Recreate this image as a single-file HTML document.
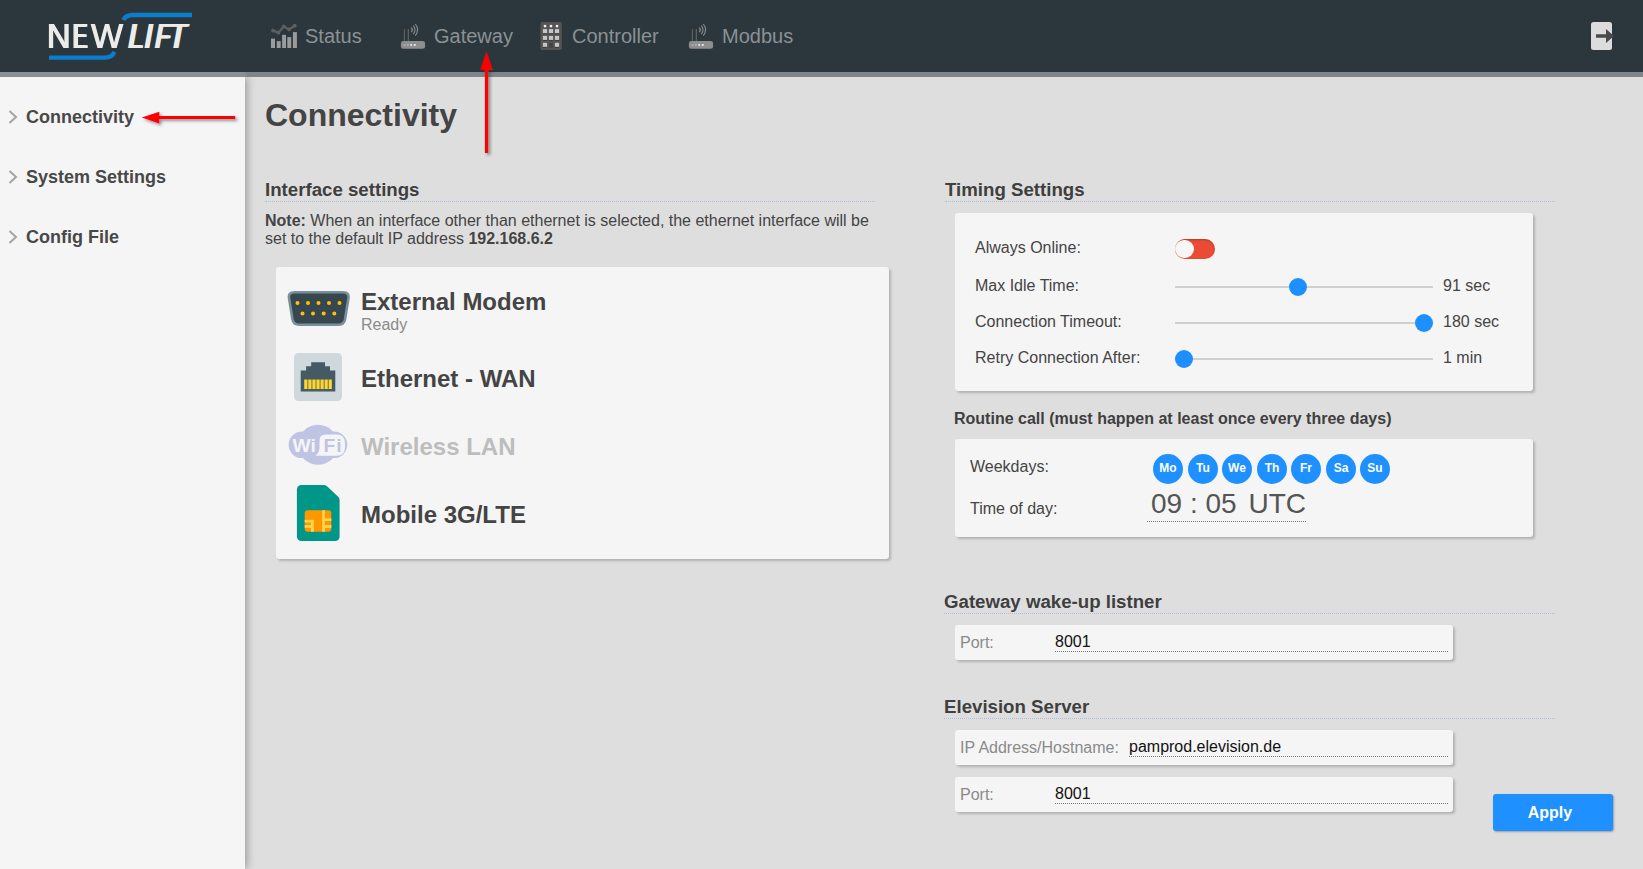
<!DOCTYPE html>
<html lang="en">
<head>
<meta charset="utf-8">
<title>Connectivity</title>
<style>
*{box-sizing:border-box;margin:0;padding:0}
html,body{width:1643px;height:869px;overflow:hidden}
body{font-family:"Liberation Sans",Arial,sans-serif;background:#dedede;color:#444;position:relative}
.abs{position:absolute}
.lg{position:absolute;top:0;font-size:35px;line-height:35px;color:#ecece8;transform-origin:0 29.63px;white-space:nowrap}
#header{position:absolute;left:0;top:0;width:1643px;height:77px;background:#2c373d;background-clip:padding-box;border-bottom:5px solid rgba(44,55,61,.53)}
.nav{position:absolute;top:24px;font-size:20px;line-height:24px;color:#8b9195;white-space:nowrap}
#sidetop{position:absolute;left:0;top:72px;width:247px;height:5px;background:linear-gradient(90deg,#f5f5f5 243px,#dedede 247px)}
#sidebar{position:absolute;left:0;top:77px;width:245px;height:792px;clip-path:inset(0 -20px 0 0);background:#f5f5f5;box-shadow:2px 0 8px rgba(0,0,0,.3)}
.side{position:absolute;left:26px;font-weight:bold;font-size:18px;line-height:22px;color:#484848;white-space:nowrap}
.chev{position:absolute;left:8px;width:10px;height:14px}
h1{position:absolute;left:265px;top:95.5px;font-size:32px;line-height:38px;font-weight:bold;color:#444}
.sec{position:absolute;font-size:18.67px;line-height:22px;font-weight:bold;color:#3f3f3f;white-space:nowrap}
.dot{position:absolute;height:0;border-top:1px dotted #aebedb}
.card{position:absolute;background:#f5f5f5;border-radius:3px;box-shadow:2px 2px 2.5px rgba(0,0,0,.2)}
.t16{position:absolute;font-size:16px;line-height:18px;color:#444;white-space:nowrap}
.if{position:absolute;left:361px;font-size:24px;line-height:28px;font-weight:bold;color:#444;white-space:nowrap}
.track{position:absolute;left:1175px;width:258px;height:2px;background:#d0d0d0}
.thumb{position:absolute;width:18px;height:18px;border-radius:50%;background:#1e8fff}
.day{position:absolute;top:454px;width:30px;height:30px;border-radius:50%;background:#1e90ff;color:#fff;font-size:12px;font-weight:bold;line-height:28px;text-align:center}
.lab{position:absolute;font-size:16px;line-height:18px;color:#8a8a8a;white-space:nowrap}
.val{position:absolute;font-size:16px;line-height:18px;color:#111;white-space:nowrap}
.udot{position:absolute;height:0;border-top:1px dotted #777}
</style>
</head>
<body>
<div id="sidebar"></div><div id="sidetop"></div>
<div id="header"></div>
<svg class="abs" style="left:40px;top:5px" width="160" height="65" viewBox="40 5 160 65">
<path d="M192 14.95 H132.5 Q125.8 14.95 123.4 20" fill="none" stroke="#0b7dcd" stroke-width="4.5"/>
<path d="M49 57.55 H105.5 Q112 57.55 114.4 51.9" fill="none" stroke="#0b7dcd" stroke-width="4.3"/>
</svg>
<div class="abs" id="logotxt" style="left:0;top:18.47px;width:200px;height:35px"><span class="lg" style="left:46.83px;transform:scaleX(0.9325);text-shadow:0.707px 0 0 #ecece8,-0.707px 0 0 #ecece8">N</span><span class="lg" style="left:73.36px;transform:scaleX(0.6164);text-shadow:1.903px 0 0 #ecece8,-1.903px 0 0 #ecece8">E</span><span class="lg" style="left:90.75px;transform:scaleX(0.971);text-shadow:0.615px 0 0 #ecece8,-0.615px 0 0 #ecece8">W</span><span class="lg" style="left:127.21px;transform:skewX(-10.2deg) scaleX(0.788);text-shadow:1.61px 0 0 #ecece8,-1.61px 0 0 #ecece8">L</span><span class="lg" style="left:141.84px;transform:skewX(-10.2deg) scaleX(1.0);text-shadow:0.77px 0 0 #ecece8,-0.77px 0 0 #ecece8">I</span><span class="lg" style="left:153.65px;transform:skewX(-10.2deg) scaleX(0.679);text-shadow:1.91px 0 0 #ecece8,-1.91px 0 0 #ecece8">F</span><span class="lg" style="left:166.6px;transform:skewX(-10.2deg) scaleX(0.828);text-shadow:1.45px 0 0 #ecece8,-1.45px 0 0 #ecece8">T</span></div>
<!-- status icon -->
<svg class="abs" style="left:268px;top:20px" width="32" height="32" viewBox="268 20 32 32">
<g fill="#9b9b9b"><rect x="271" y="38.6" width="4" height="9.4"/><rect x="276.8" y="41.1" width="3.9" height="6.9"/><rect x="282.1" y="34.8" width="3.9" height="13.2"/><rect x="287.3" y="37.1" width="3.9" height="10.9"/><rect x="292.9" y="32.1" width="4" height="15.9"/></g>
<path d="M273 30.7 L278.4 32.7 L283.75 26.4 L289.1 29.4 L294.8 25.7" fill="none" stroke="#5f5f5f" stroke-width="2.3" stroke-linejoin="round" stroke-linecap="round"/>
<g fill="#5f5f5f"><circle cx="273" cy="30.7" r="1.9"/><circle cx="278.4" cy="32.7" r="1.9"/><circle cx="283.75" cy="26.4" r="1.9"/><circle cx="289.1" cy="29.4" r="1.9"/><circle cx="294.8" cy="25.7" r="1.9"/></g>
</svg>
<div class="nav" style="left:305px">Status</div>
<svg class="abs" style="left:398px;top:20px" width="32" height="32" viewBox="398 20 32 32">
<rect x="400.9" y="41.1" width="24.2" height="7.7" rx="2.4" fill="#8e8e8e"/>
<rect x="403.9" y="29" width="0.9" height="12.1" fill="#6a6a6a"/><rect x="407.8" y="29" width="1" height="12.1" fill="#6a6a6a"/>
<rect x="403.8" y="44" width="1.6" height="1.9" fill="#adadad"/><rect x="407" y="44" width="1.6" height="1.9" fill="#b4b4b4"/><rect x="410.4" y="44" width="1.6" height="1.9" fill="#ececec"/><rect x="413.8" y="44" width="1.8" height="1.9" fill="#ececec"/>
<g fill="none" stroke="#909090" stroke-width="1.1">
<path d="M411.3 27.6 A3.2 3.2 0 0 1 411.3 32.0"/>
<path d="M413.3 25.6 A6 6 0 0 1 413.3 34.0"/>
<path d="M415.3 24.0 A8.6 8.6 0 0 1 415.3 35.6"/>
</g>
</svg>
<div class="nav" style="left:434px">Gateway</div>
<svg class="abs" style="left:538px;top:20px" width="26" height="32" viewBox="538 20 26 32">
<rect x="540.4" y="22" width="21.4" height="28.1" rx="1.8" fill="#545454"/>
<g fill="#f0f0f0"><rect x="543.8" y="24.9" width="2.4" height="2.4"/><rect x="549.8" y="24.9" width="2.4" height="2.4"/><rect x="555.8" y="24.9" width="2.4" height="2.4"/></g>
<g fill="#3e3e3e"><rect x="542.9" y="33.1" width="4.2" height="1"/><rect x="548.9" y="33.1" width="4.2" height="1"/><rect x="554.9" y="33.1" width="4.2" height="1"/>
<rect x="542.9" y="39.9" width="4.2" height="1"/><rect x="548.9" y="39.9" width="4.2" height="1"/><rect x="554.9" y="39.9" width="4.2" height="1"/>
<rect x="542.9" y="46.8" width="4.2" height="1"/><rect x="554.9" y="46.8" width="4.2" height="1"/></g>
<g fill="#c6c6c6"><rect x="542.9" y="29.1" width="4.2" height="4"/><rect x="548.9" y="29.1" width="4.2" height="4"/><rect x="554.9" y="29.1" width="4.2" height="4"/>
<rect x="542.9" y="35.9" width="4.2" height="4"/><rect x="548.9" y="35.9" width="4.2" height="4"/><rect x="554.9" y="35.9" width="4.2" height="4"/>
<rect x="542.9" y="42.8" width="4.2" height="4"/><rect x="554.9" y="42.8" width="4.2" height="4"/></g>
<rect x="549.1" y="43" width="3.8" height="4.7" fill="#444"/>
</svg>
<div class="nav" style="left:572px">Controller</div>
<svg class="abs" style="left:686px;top:20px" width="32" height="32" viewBox="398 20 32 32">
<rect x="400.9" y="41.1" width="24.2" height="7.7" rx="2.4" fill="#8e8e8e"/>
<rect x="403.9" y="29" width="0.9" height="12.1" fill="#6a6a6a"/><rect x="407.8" y="29" width="1" height="12.1" fill="#6a6a6a"/>
<rect x="403.8" y="44" width="1.6" height="1.9" fill="#adadad"/><rect x="407" y="44" width="1.6" height="1.9" fill="#b4b4b4"/><rect x="410.4" y="44" width="1.6" height="1.9" fill="#ececec"/><rect x="413.8" y="44" width="1.8" height="1.9" fill="#ececec"/>
<g fill="none" stroke="#909090" stroke-width="1.1">
<path d="M411.3 27.6 A3.2 3.2 0 0 1 411.3 32.0"/>
<path d="M413.3 25.6 A6 6 0 0 1 413.3 34.0"/>
<path d="M415.3 24.0 A8.6 8.6 0 0 1 415.3 35.6"/>
</g>
</svg>
<div class="nav" style="left:722px">Modbus</div>
<!-- logout -->
<svg class="abs" style="left:1590px;top:21px" width="26" height="30" viewBox="0 0 26 30">
<rect x="1" y="1" width="21" height="28" rx="2.5" fill="#dcdcdc"/>
<path d="M6 13.2 H16 V8 L24 15 L16 22 V16.8 H6 Z" fill="#4a4a4a"/>
</svg>
<!-- red arrows -->
<svg class="abs" style="left:470px;top:50px" width="40" height="110" viewBox="470 50 40 110">
<defs><filter id="sh" x="-50%" y="-50%" width="200%" height="200%"><feDropShadow dx="2" dy="2" stdDeviation="1.5" flood-color="#203030" flood-opacity=".5"/></filter></defs>
<g filter="url(#sh)"><path d="M484.9 69.7 L484.9 153.1 L488.2 153.1 L488.2 69.7 L492.6 69.7 L486.5 51.6 L480.3 69.7 Z" fill="#ff0000"/></g>
</svg>
<svg class="abs" style="left:135px;top:100px;z-index:5" width="110" height="36" viewBox="135 100 110 36">
<g filter="url(#sh)"><path d="M141.8 117.5 L159.3 111.8 L159.3 115.9 L235.3 115.9 L235.3 119.1 L159.3 119.1 L159.3 123.4 Z" fill="#ff0000"/></g>
</svg>
<svg class="chev" style="top:110px" viewBox="0 0 10 14"><path d="M1.5 1 L8 7 L1.5 13" fill="none" stroke="#a6a6a6" stroke-width="2.1"/></svg>
<div class="side" style="top:106px">Connectivity</div>
<svg class="chev" style="top:170px" viewBox="0 0 10 14"><path d="M1.5 1 L8 7 L1.5 13" fill="none" stroke="#a6a6a6" stroke-width="2.1"/></svg>
<div class="side" style="top:166px">System Settings</div>
<svg class="chev" style="top:230px" viewBox="0 0 10 14"><path d="M1.5 1 L8 7 L1.5 13" fill="none" stroke="#a6a6a6" stroke-width="2.1"/></svg>
<div class="side" style="top:226px">Config File</div>
<h1>Connectivity</h1>
<div class="sec" style="left:265px;top:179px">Interface settings</div>
<div class="dot" style="left:265px;top:201px;width:610px"></div>
<div class="t16" style="left:265px;top:212px;white-space:normal;width:640px"><b>Note:</b> When an interface other than ethernet is selected, the ethernet interface will be<br>set to the default IP address <b>192.168.6.2</b></div>
<div class="card" style="left:276px;top:267px;width:613px;height:292px"></div>
<!-- DB9 -->
<svg class="abs" style="left:286px;top:289px" width="64" height="40" viewBox="286 289 64 40">
<path d="M294.5 292.3 L343 292.3 Q349.3 292.3 348.5 298 L345 319.5 Q344 324.7 338.5 324.7 L299 324.7 Q293.5 324.7 292.5 319.5 L289 298 Q288.2 292.3 294.5 292.3 Z" fill="#37474f" stroke="#78909c" stroke-width="2.6"/>
<g fill="#ffc107"><circle cx="297.5" cy="303" r="2"/><circle cx="308" cy="303" r="2"/><circle cx="318.5" cy="303" r="2"/><circle cx="329" cy="303" r="2"/><circle cx="339.5" cy="303" r="2"/>
<circle cx="302.5" cy="313.5" r="2"/><circle cx="313" cy="313.5" r="2"/><circle cx="323.7" cy="313.5" r="2"/><circle cx="334.3" cy="313.5" r="2"/></g>
</svg>
<!-- Ethernet -->
<svg class="abs" style="left:294px;top:353px" width="48" height="48" viewBox="0 0 48 48">
<rect x="0" y="0" width="48" height="48" rx="4.5" fill="#cfd8dc"/>
<path d="M6.7 38.5 V17.4 H12.1 V13.3 H17.2 V9.2 H31 V13.3 H36 V17.4 H41.3 V38.5 Z" fill="#455a64"/>
<rect x="10" y="26.4" width="28" height="9.8" fill="#737548"/>
<g fill="#fdd835"><rect x="10.30" y="26.6" width="3" height="9.4"/><rect x="14.38" y="26.6" width="3" height="9.4"/><rect x="18.46" y="26.6" width="3" height="9.4"/><rect x="22.54" y="26.6" width="3" height="9.4"/><rect x="26.62" y="26.6" width="3" height="9.4"/><rect x="30.70" y="26.6" width="3" height="9.4"/><rect x="34.78" y="26.6" width="3" height="9.4"/></g>
</svg>
<!-- WiFi -->
<svg class="abs" style="left:287px;top:423px" width="64" height="46" viewBox="287 423 64 46">
<g fill="#bfc4e4">
<circle cx="318" cy="444.85" r="20"/>
<rect x="288.6" y="431.6" width="58.7" height="26.5" rx="13.25"/>
</g>
<path d="M325.5 434.5 H336.5 Q345 434.5 345 443 V447.2 Q345 455.7 336.5 455.7 H315.5 Q319.5 452.5 319.5 447 V440.5 Q319.5 434.5 325.5 434.5 Z" fill="#f5f5f5"/>
<text x="292.6" y="451.8" font-family="Liberation Sans, sans-serif" font-weight="bold" font-size="18.9" fill="#f5f5f5" textLength="23.3" lengthAdjust="spacingAndGlyphs">Wi</text>
<text x="323.4" y="451.6" font-family="Liberation Sans, sans-serif" font-weight="bold" font-size="19.2" fill="#bfc4e4">F<tspan dx="1.2">i</tspan></text>
</svg>
<!-- SIM -->
<svg class="abs" style="left:295px;top:483px" width="48" height="60" viewBox="295 483 48 60">
<path d="M301.8 484.9 H323.5 Q325.5 484.9 327 486.3 L338.2 496.8 Q339.6 498.2 339.6 500.2 V536.2 Q339.6 540.9 335 540.9 H301.8 Q296.9 540.9 296.9 536.2 V489.6 Q296.9 484.9 301.8 484.9 Z" fill="#009688"/>
<rect x="304.7" y="510.2" width="26.6" height="21.6" rx="3" fill="#ff9800"/>
<g fill="#ffd54f">
<rect x="322.2" y="510.2" width="2.7" height="21.6"/>
<rect x="324.9" y="518.3" width="6.4" height="2.7"/><rect x="324.9" y="525.1" width="6.4" height="2.8"/>
<rect x="304.7" y="519.9" width="9.1" height="2.6"/><rect x="311" y="519.9" width="2.8" height="11.9"/>
<rect x="304.7" y="525.1" width="6.3" height="2.7"/>
</g>
</svg>
<div class="if" style="top:288px">External Modem</div>
<div class="t16" style="left:361px;top:316px;color:#8a8a8a">Ready</div>
<div class="if" style="top:365px">Ethernet - WAN</div>
<div class="if" style="top:433px;color:#bdbdbd">Wireless LAN</div>
<div class="if" style="top:501px">Mobile 3G/LTE</div>

<div class="sec" style="left:945px;top:179px">Timing Settings</div>
<div class="dot" style="left:945px;top:201px;width:610px"></div>
<div class="card" style="left:955px;top:213px;width:578px;height:178px"></div>
<div class="t16" style="left:975px;top:239px">Always Online:</div>
<div class="abs" style="left:1175px;top:239px;width:40px;height:20px;border-radius:10px;background:#e94b35;box-shadow:inset 0 1px 2px rgba(0,0,0,.25)"></div>
<div class="abs" style="left:1175.4px;top:239.6px;width:18.8px;height:18.8px;border-radius:50%;background:#f6f6f6"></div>
<div class="t16" style="left:975px;top:277px">Max Idle Time:</div>
<div class="track" style="top:286px"></div><div class="thumb" style="left:1289px;top:278px"></div>
<div class="t16" style="left:1443px;top:277px">91 sec</div>
<div class="t16" style="left:975px;top:313px">Connection Timeout:</div>
<div class="track" style="top:322px"></div><div class="thumb" style="left:1415px;top:314px"></div>
<div class="t16" style="left:1443px;top:313px">180 sec</div>
<div class="t16" style="left:975px;top:349px">Retry Connection After:</div>
<div class="track" style="top:358px"></div><div class="thumb" style="left:1175px;top:350px"></div>
<div class="t16" style="left:1443px;top:349px">1 min</div>

<div class="t16" style="left:954px;top:410px;font-weight:bold;color:#3f3f3f">Routine call (must happen at least once every three days)</div>
<div class="card" style="left:955px;top:439px;width:578px;height:98px"></div>
<div class="t16" style="left:970px;top:458px">Weekdays:</div>
<div class="day" style="left:1153px">Mo</div><div class="day" style="left:1188px">Tu</div><div class="day" style="left:1222px">We</div><div class="day" style="left:1257px">Th</div><div class="day" style="left:1291px">Fr</div><div class="day" style="left:1326px">Sa</div><div class="day" style="left:1360px">Su</div>
<div class="t16" style="left:970px;top:500px">Time of day:</div>
<div class="abs" style="left:1151px;top:487px;font-size:28px;line-height:34px;color:#555;white-space:nowrap;word-spacing:0">09 : 05 <span style="margin-left:4px">UTC</span></div>
<div class="udot" style="left:1147px;top:521px;width:159px"></div>

<div class="sec" style="left:944px;top:591px">Gateway wake-up listner</div>
<div class="dot" style="left:944px;top:613px;width:611px"></div>
<div class="card" style="left:955px;top:625px;width:498px;height:35px"></div>
<div class="lab" style="left:960px;top:634px">Port:</div>
<div class="val" style="left:1055px;top:633px">8001</div>
<div class="udot" style="left:1055px;top:651px;width:393px"></div>

<div class="sec" style="left:944px;top:696px">Elevision Server</div>
<div class="dot" style="left:944px;top:718px;width:611px"></div>
<div class="card" style="left:955px;top:730px;width:498px;height:35px"></div>
<div class="lab" style="left:960px;top:739px">IP Address/Hostname:</div>
<div class="val" style="left:1129px;top:738px">pamprod.elevision.de</div>
<div class="udot" style="left:1129px;top:756px;width:319px"></div>
<div class="card" style="left:955px;top:777px;width:498px;height:35px"></div>
<div class="lab" style="left:960px;top:786px">Port:</div>
<div class="val" style="left:1055px;top:785px">8001</div>
<div class="udot" style="left:1055px;top:803px;width:393px"></div>

<div class="abs" style="left:1493px;top:794px;width:120px;height:37px;background:#1e90ff;border-radius:3px;box-shadow:1px 1px 2px rgba(0,0,0,.3);color:#fff;font-weight:bold;font-size:16px;line-height:37px;text-align:center;padding-right:6px">Apply</div>
</body>
</html>
